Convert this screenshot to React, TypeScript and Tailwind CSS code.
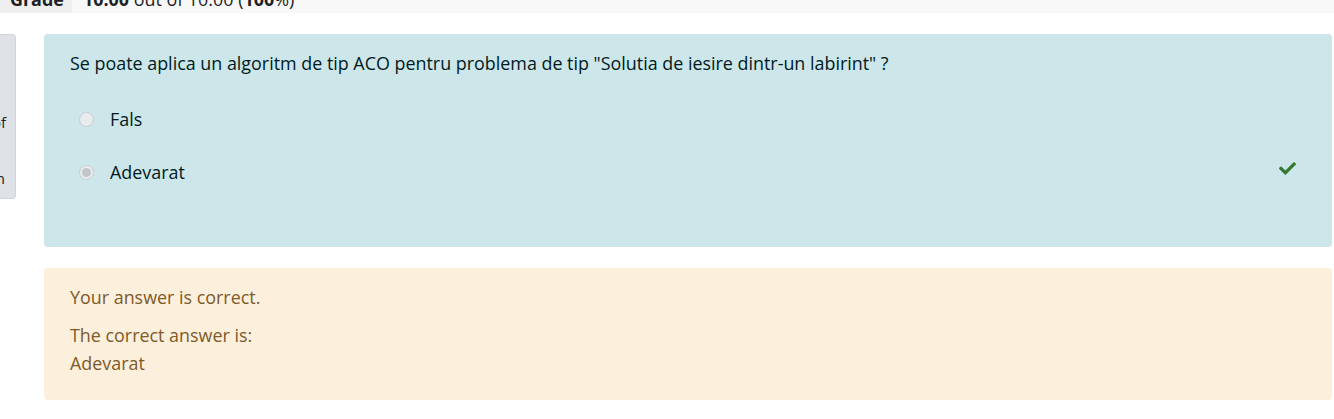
const font = { fontFamily: '"Open Sans", "Noto Sans", sans-serif' };

function Radio({ checked }: { checked?: boolean }) {
  return (
    <span className="flex h-[15px] w-[15px] items-center justify-center rounded-full border border-[#c9cdd1] bg-[#e9ecef]">
      {checked && <span className="h-[9px] w-[9px] rounded-full bg-[#c3c6c9]" />}
    </span>
  );
}

function Check() {
  return (
    <svg width="17" height="17" viewBox="0 0 512 512" fill="#357a32">
      <path d="M173.898 439.404l-166.4-166.4c-9.997-9.997-9.997-26.206 0-36.204l36.203-36.204c9.997-9.998 26.207-9.998 36.204 0L192 312.69 432.095 72.596c9.997-9.997 26.207-9.997 36.204 0l36.203 36.204c9.997 9.997 9.997 26.206 0 36.204l-294.4 294.401c-9.998 9.997-26.207 9.997-36.204-.001z" />
    </svg>
  );
}

export default function App() {
  return (
    <div className="min-h-[419px] overflow-hidden bg-white text-[17.9px]" style={font}>
      {/* grade row, scrolled mostly out of view */}
      <div className="-mt-[14px] flex h-[27px] bg-[#f8f8f8] text-[#1d2125]">
        <div className="flex w-[72px] items-center bg-[#efefef] pl-[10px] font-bold leading-[27px]">
          Grade
        </div>
        <div className="flex items-center whitespace-nowrap pl-[11px] leading-[27px]">
          <b>10.00</b>&nbsp;out of 10.00 (<b>100</b>%)
        </div>
      </div>

      <div className="mt-[21px] flex">
        {/* info panel, cut off on the left */}
        <div className="h-[165px] w-[16px] overflow-hidden rounded-r-[4px] border border-l-0 border-[#cfd4d8] bg-[#dee2e6] text-[15px] text-[#1d2125]">
          <div className="flex justify-end whitespace-nowrap pr-[9px] pt-[77px] leading-[20px]">Mark 1.00 out of</div>
          <div className="flex justify-end whitespace-nowrap pr-[10px] pt-[36px] leading-[20px]">Flag question</div>
        </div>

        <div className="ml-[28px] flex w-[1288px] flex-col">
          <div className="h-[213px] rounded-[4px] bg-[#cce6ea] px-[26px] pt-[16px] text-[#001a1e]">
            <div className="leading-[26px]">
              Se poate aplica un algoritm de tip ACO pentru problema de tip "Solutia de iesire dintr-un labirint" ?
            </div>
            <div className="mt-[30px] flex flex-col gap-[27px]">
              <div className="flex h-[26px] items-center">
                <div className="ml-[9px] mr-[16px]">
                  <Radio />
                </div>
                <span className="leading-[26px]">Fals</span>
              </div>
              <div className="flex h-[26px] items-center">
                <div className="ml-[9px] mr-[16px]">
                  <Radio checked />
                </div>
                <span className="leading-[26px]">Adevarat</span>
                <div className="ml-auto mr-[10px] mt-[-8px]">
                  <Check />
                </div>
              </div>
            </div>
          </div>

          <div className="mt-[21px] h-[132px] rounded-[4px] bg-[#fcefdc] px-[26px] pt-[15px] text-[#7d5a29]">
            <div className="leading-[28px]">Your answer is correct.</div>
            <div className="mt-[10px] leading-[28px]">The correct answer is:</div>
            <div className="leading-[28px]">Adevarat</div>
          </div>
        </div>
      </div>
    </div>
  );
}
